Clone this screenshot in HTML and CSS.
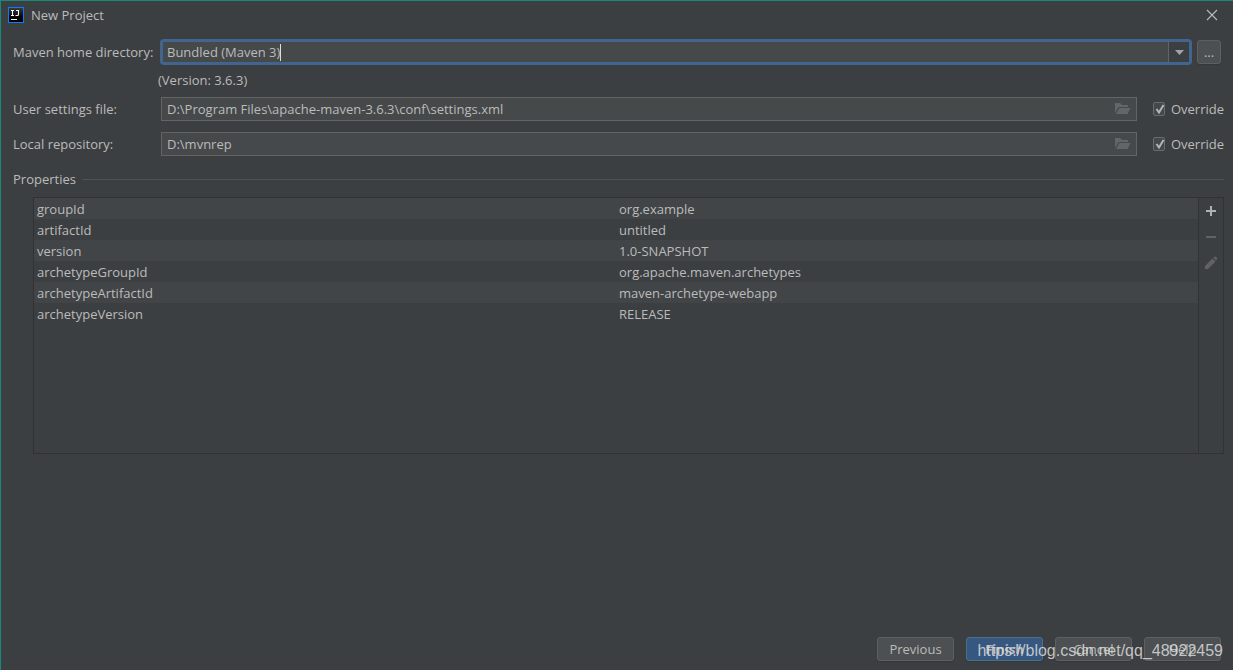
FILE: index.html
```html
<!DOCTYPE html>
<html lang="en">
<head>
<meta charset="utf-8">
<title>New Project</title>
<link rel="stylesheet" href="styles.css">
</head>
<body>
<div class="dialog">
  <header class="titlebar">
    <svg class="logo" width="16" height="16" viewBox="0 0 16 16" aria-hidden="true">
      <defs><linearGradient id="lg" x1="0" y1="0" x2="0" y2="1"><stop offset="0" stop-color="#393939"/><stop offset=".7" stop-color="#000"/></linearGradient></defs>
      <rect width="16" height="16" fill="#087cfa"/>
      <rect x="1" y="1" width="14" height="14" fill="url(#lg)"/>
      <path d="M3 3.500h3M4.500 3v5M3 8.500h3M8 3.500h3M10.500 3v4.500q0 1-1 1H7.500M3 12.500h6" stroke="#fff" stroke-width="1.100" fill="none"/>
    </svg>
    <h1 class="title">New Project</h1>
    <button class="close" type="button" aria-label="Close">
      <svg width="12" height="12" viewBox="0 0 12 12"><path d="M1 1l10 10M11 1L1 11" stroke="#bbb" stroke-width="1.100"/></svg>
    </button>
  </header>

  <form class="content">
    <div class="row">
      <label class="label" for="home">Maven home directory:</label>
      <div class="combo">
        <input class="combo-input" id="home" type="text" value="Bundled (Maven 3)">
        <span class="caret"></span>
        <button class="combo-arrow" type="button" aria-label="Show options">
          <svg width="9" height="5" viewBox="0 0 9 5"><path d="M0 0h9L4.500 5z" fill="#a0a4a6"/></svg>
        </button>
      </div>
      <button class="button browse" type="button">...</button>
    </div>
    <p class="version">(Version: 3.6.3)</p>
    <div class="row">
      <label class="label" for="settings">User settings file:</label>
      <div class="field">
        <input class="field-input" id="settings" type="text" value="D:\Program Files\apache-maven-3.6.3\conf\settings.xml">
        <svg class="folder" width="16" height="12" viewBox="0 0 16 12"><path d="M0 10V0h5l2 2h6v2H3.500zM4.300 5H15.500l-3 6H1z" fill="#616669"/></svg>
      </div>
      <label class="override"><input class="check" type="checkbox" checked><svg class="tick" width="14" height="14" viewBox="0 0 14 14"><path d="M3.500 7l2.500 3.500L10.500 3" stroke="#b5b5b5" stroke-width="2" fill="none"/></svg>Override</label>
    </div>
    <div class="row">
      <label class="label" for="repo">Local repository:</label>
      <div class="field">
        <input class="field-input" id="repo" type="text" value="D:\mvnrep">
        <svg class="folder" width="16" height="12" viewBox="0 0 16 12"><path d="M0 10V0h5l2 2h6v2H3.500zM4.300 5H15.500l-3 6H1z" fill="#616669"/></svg>
      </div>
      <label class="override"><input class="check" type="checkbox" checked><svg class="tick" width="14" height="14" viewBox="0 0 14 14"><path d="M3.500 7l2.500 3.500L10.500 3" stroke="#b5b5b5" stroke-width="2" fill="none"/></svg>Override</label>
    </div>

    <h2 class="section">Properties</h2>
    <div class="panel">
      <div class="table-area">
        <table class="props">
          <tbody>
            <tr><td>groupId</td><td>org.example</td></tr>
            <tr><td>artifactId</td><td>untitled</td></tr>
            <tr><td>version</td><td>1.0-SNAPSHOT</td></tr>
            <tr><td>archetypeGroupId</td><td>org.apache.maven.archetypes</td></tr>
            <tr><td>archetypeArtifactId</td><td>maven-archetype-webapp</td></tr>
            <tr><td>archetypeVersion</td><td>RELEASE</td></tr>
          </tbody>
        </table>
      </div>
      <div class="tools">
        <button class="tool" type="button" aria-label="Add"><svg width="16" height="16" viewBox="0 0 16 16"><path d="M3 8h10M8 3v10" stroke="#afb1b3" stroke-width="2"/></svg></button>
        <button class="tool" type="button" aria-label="Remove" disabled><svg width="16" height="16" viewBox="0 0 16 16"><path d="M3 8h10" stroke="#606263" stroke-width="2"/></svg></button>
        <button class="tool" type="button" aria-label="Edit" disabled><svg width="16" height="16" viewBox="0 0 16 16"><path d="M2 14v-3l7.500-7.500 3 3L5 14zM10.300 2.700l1-1q1-.7 2 .3l.6.700q.800 1 0 1.800l-.800 1z" fill="#606263"/></svg></button>
      </div>
    </div>
  </form>

  <footer class="footer">
    <button class="button" type="button">Previous</button>
    <button class="button primary" type="button">Finish</button>
    <button class="button" type="button">Cancel</button>
    <button class="button" type="button">Help</button>
    <span class="watermark">https://blog.csdn.net/qq_48922459</span>
  </footer>
</div>
</body>
</html>
```
FILE: styles.css
```css
* {
  box-sizing: border-box;
}

body {
  margin: 0;
  background: #3c3f41;
  color: #bbbbbb;
  font: 13px/20px "Open Sans", "Noto Sans", sans-serif;
}

input,
button {
  margin: 0;
  padding: 0;
  border: 0;
  background: none;
  color: inherit;
  font: inherit;
  outline: 0;
}

.dialog {
  display: flex;
  flex-direction: column;
  min-height: 100vh;
  border: solid #1a8a78;
  border-width: 1px 0 0 1px;
}

.titlebar {
  display: flex;
  align-items: center;
  gap: 7px;
  height: 28px;
  padding: 0 15px 0 7px;
}

.title {
  flex: 1;
  margin: 0;
  font-size: 13px;
  font-weight: 400;
}

.close {
  display: flex;
}

.content {
  flex: 1;
  padding: 10px 9px 0 12px;
}

.row {
  display: flex;
  align-items: center;
  margin-bottom: 11px;
}

.label {
  width: 148px;
}

.combo {
  display: flex;
  align-items: center;
  flex: 1;
  height: 26px;
  margin-left: -1px;
  padding-left: 4px;
  border: 3px solid #41658e;
  border-radius: 4px;
  background: #45494a;
}

.combo-input {
  field-sizing: content;
  height: 20px;
}

.caret {
  width: 1px;
  height: 17px;
  background: #dddddd;
}

.combo-arrow {
  display: flex;
  align-items: center;
  justify-content: center;
  align-self: stretch;
  width: 21px;
  margin-left: auto;
  border-left: 1px solid #646464;
  background: #3c3f41;
}

.version {
  margin: -6px 0 7px 145px;
}

.field {
  display: flex;
  align-items: center;
  flex: 1;
  height: 24px;
  padding: 0 5px;
  border: 1px solid #646464;
  background: #45494a;
}

.field-input {
  flex: 1;
  height: 20px;
}

.override {
  position: relative;
  display: flex;
  align-items: center;
  gap: 6px;
  width: 87px;
  padding-left: 16px;
}

.check {
  appearance: none;
  width: 14px;
  height: 14px;
  border: 1px solid #6b6b6b;
  border-radius: 2px;
  background: #43494a;
}

.tick {
  position: absolute;
  left: 16px;
  pointer-events: none;
}

.section {
  display: flex;
  align-items: center;
  gap: 6px;
  margin: 13px 0 8px;
  font-size: 13px;
  font-weight: 400;
}

.section::after {
  content: "";
  flex: 1;
  height: 1px;
  background: #515151;
}

.panel {
  display: flex;
  min-height: 257px;
  margin-left: 20px;
  border: 1px solid #323232;
}

.table-area {
  flex: 1;
}

.props {
  width: 100%;
  table-layout: fixed;
  border-collapse: collapse;
}

.props td {
  height: 21px;
  padding: 0 3px;
}

.props tr:nth-child(odd) {
  background: #414547;
}

.tools {
  display: flex;
  flex-direction: column;
  gap: 10px;
  padding: 5px 4px;
  border-left: 1px solid #323232;
}

.tool {
  display: flex;
}

.button {
  width: 77px;
  height: 24px;
  border: 1px solid #5e6060;
  border-radius: 3px;
  background: #4c5052;
  box-shadow: 0 1px 1px #35383a;
  line-height: 22px;
}

.browse {
  width: 24px;
  margin: 0 3px 0 5px;
}

.primary {
  border-color: #4c708c;
  background: #365880;
  font-weight: 700;
}

.footer {
  position: relative;
  display: flex;
  justify-content: flex-end;
  gap: 12px;
  padding: 0 12px 9px;
}

.watermark {
  position: absolute;
  right: 10px;
  bottom: 9px;
  color: rgba(220, 220, 220, 0.85);
  font: 16px/20px "Liberation Sans", Arial, sans-serif;
  pointer-events: none;
}
```
